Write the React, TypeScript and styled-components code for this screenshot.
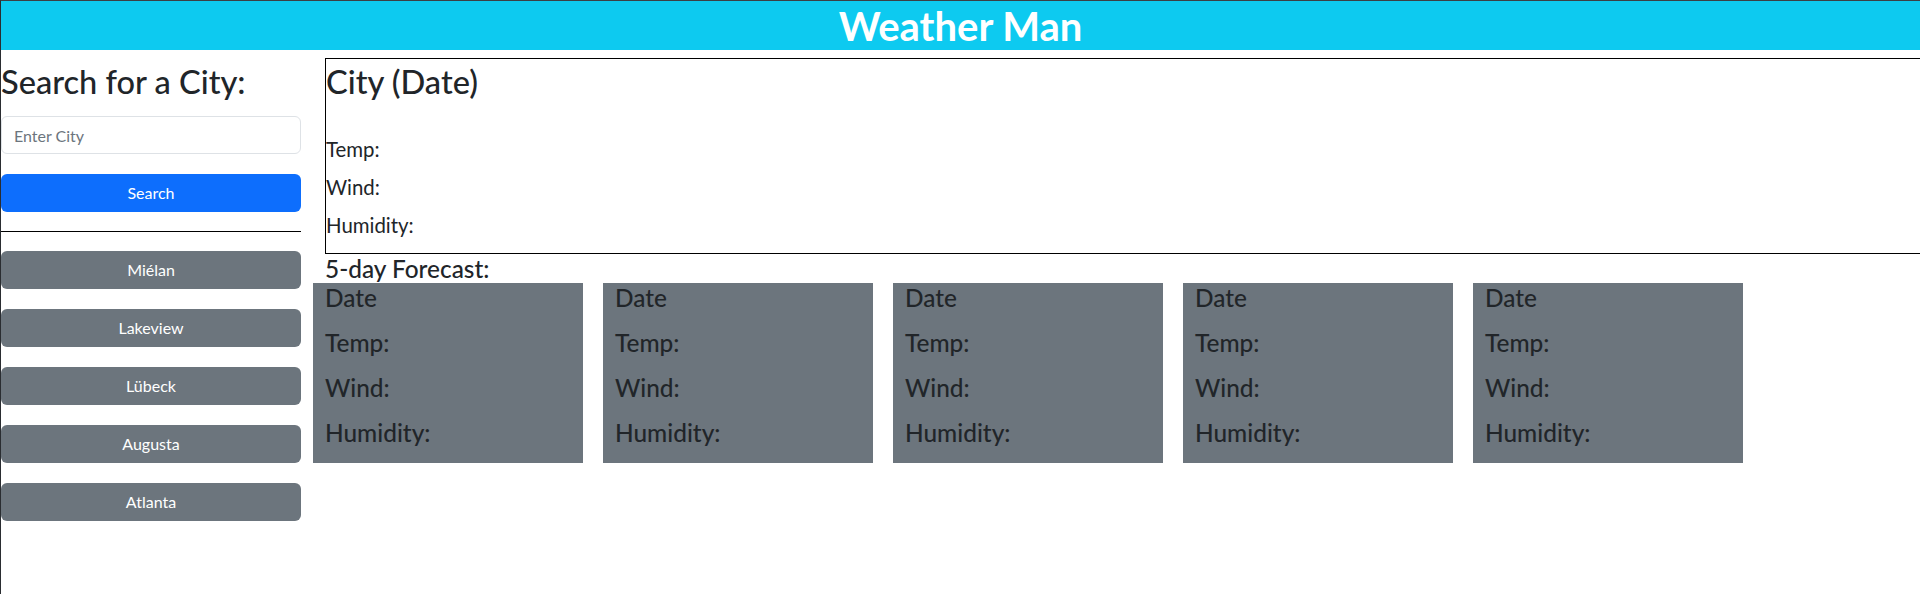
import React from 'react';
import styled, { createGlobalStyle } from 'styled-components';

const GlobalStyle = createGlobalStyle`
  html, body {
    margin: 0;
    padding: 0;
    background: #ffffff;
    overflow: hidden;
  }
  body {
    font-family: Lato, "Open Sans", "Liberation Sans", sans-serif;
    color: #212529;
  }
  * { box-sizing: border-box; }
`;

const Page = styled.div`
  width: 1920px;
  height: 594px;
  overflow: hidden;
  border-top: 1px solid #3b3f45;
  border-left: 1px solid #2a2d31;
  background: #ffffff;
`;

const Header = styled.header`
  height: 49px;
  background: #0dcaf0;
  display: flex;
  align-items: center;
  justify-content: center;
`;

const Title = styled.h1`
  margin: 0;
  font-size: 40px;
  line-height: 48px;
  font-weight: 700;
  color: #ffffff;
`;

const Content = styled.div`
  display: flex;
  align-items: flex-start;
`;

const Sidebar = styled.aside`
  width: 300px;
  flex-shrink: 0;
  display: flex;
  flex-direction: column;
`;

const SideTitle = styled.h3`
  margin: 13px 0 0;
  font-size: 32.6px;
  line-height: 38px;
  font-weight: 500;
`;

const CityInput = styled.input`
  margin-top: 15px;
  width: 100%;
  height: 38px;
  padding: 6px 12px;
  border: 1px solid #dee2e6;
  border-radius: 6px;
  font: inherit;
  font-size: 16px;
  color: #212529;
  &::placeholder { color: #6c757d; }
`;

const Btn = styled.button<{ $variant?: 'primary' | 'secondary' }>`
  width: 100%;
  height: 38px;
  border: none;
  border-radius: 6px;
  background: ${p => (p.$variant === 'primary' ? '#0d6efd' : '#6c757d')};
  color: #ffffff;
  font: inherit;
  font-size: 16px;
  line-height: 24px;
  text-align: center;
  cursor: pointer;
`;

const SearchBtn = styled(Btn)`
  margin-top: 20px;
`;

const Divider = styled.hr`
  margin: 19px 0 0;
  border: none;
  border-top: 1px solid #000000;
`;

const History = styled.div`
  margin-top: 19px;
  display: flex;
  flex-direction: column;
  gap: 20px;
`;

const Main = styled.main`
  margin-left: 24px;
  display: flex;
  flex-direction: column;
`;

const CurrentBox = styled.section`
  margin-top: 8px;
  width: 1700px;
  border: 1px solid #000000;
  padding-bottom: 2px;
`;

const CityTitle = styled.h2`
  margin: 4px 0 36px;
  font-size: 32.6px;
  line-height: 38px;
  font-weight: 500;
`;

const Stat = styled.p`
  margin: 0 0 14px;
  font-size: 20.4px;
  line-height: 24px;
`;

const ForecastTitle = styled.h4`
  margin: 0;
  font-size: 24.4px;
  line-height: 29px;
  font-weight: 500;
`;

const CardRow = styled.div`
  margin-left: -12px;
  display: flex;
  gap: 20px;
`;

const Card = styled.div`
  width: 270px;
  background: #6c757d;
  padding: 0 12px;
`;

const CardLine = styled.h4`
  margin: 0 0 16px;
  font-size: 24.4px;
  line-height: 29px;
  font-weight: 500;
  color: #212529;
`;

const cities = ['Miélan', 'Lakeview', 'Lübeck', 'Augusta', 'Atlanta'];

export default function App() {
  return (
    <Page>
      <GlobalStyle />
      <Header>
        <Title>Weather Man</Title>
      </Header>
      <Content>
        <Sidebar>
          <SideTitle>Search for a City:</SideTitle>
          <CityInput placeholder="Enter City" />
          <SearchBtn $variant="primary">Search</SearchBtn>
          <Divider />
          <History>
            {cities.map(c => (
              <Btn key={c} $variant="secondary">{c}</Btn>
            ))}
          </History>
        </Sidebar>
        <Main>
          <CurrentBox>
            <CityTitle>City (Date)</CityTitle>
            <Stat>Temp:</Stat>
            <Stat>Wind:</Stat>
            <Stat>Humidity:</Stat>
          </CurrentBox>
          <ForecastTitle>5-day Forecast:</ForecastTitle>
          <CardRow>
            {[0, 1, 2, 3, 4].map(i => (
              <Card key={i}>
                <CardLine>Date</CardLine>
                <CardLine>Temp:</CardLine>
                <CardLine>Wind:</CardLine>
                <CardLine>Humidity:</CardLine>
              </Card>
            ))}
          </CardRow>
        </Main>
      </Content>
    </Page>
  );
}
